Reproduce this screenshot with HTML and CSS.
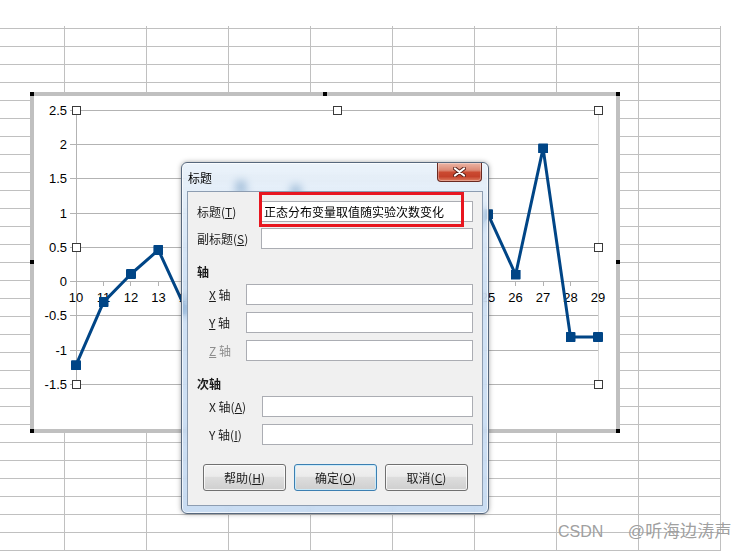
FILE: index.html
```html
<!DOCTYPE html>
<html lang="zh-CN">
  <head>
    <meta charset="UTF-8" />
    <meta name="viewport" content="width=device-width, initial-scale=1.0" />
    <title>标题</title>
    <link rel="stylesheet" href="styles.css">
  </head>
  <body>
    <div class="sheet"></div>

    <!-- chart object sitting on the sheet -->
    <div class="chart">
      <svg width="590" height="341" viewBox="30 92 590 341">
        <defs>
          <marker id="sq" viewBox="0 0 10 10" refX="5" refY="5" markerWidth="10" markerHeight="10" markerUnits="userSpaceOnUse">
            <rect width="10" height="10" rx="1" fill="#004586" />
          </marker>
        </defs>
        <rect class="frame" x="32" y="94" width="586" height="337" />

        <g class="grid">
          <line x1="70" y1="110.5" x2="598" y2="110.5" />
          <line x1="70" y1="144.5" x2="598" y2="144.5" />
          <line x1="70" y1="178.5" x2="598" y2="178.5" />
          <line x1="70" y1="213.5" x2="598" y2="213.5" />
          <line x1="70" y1="247.5" x2="598" y2="247.5" />
          <line x1="70" y1="281.5" x2="598" y2="281.5" />
          <line x1="70" y1="315.5" x2="598" y2="315.5" />
          <line x1="70" y1="350.5" x2="598" y2="350.5" />
          <line x1="70" y1="384.5" x2="598" y2="384.5" />
          <line x1="76.5" y1="110.5" x2="76.5" y2="384.5" />
          <line class="edge" x1="598.5" y1="110.5" x2="598.5" y2="384.5" />
        </g>

        <g class="ticks">
          <line x1="103.5" y1="281.5" x2="103.5" y2="286" />
          <line x1="130.5" y1="281.5" x2="130.5" y2="286" />
          <line x1="158.5" y1="281.5" x2="158.5" y2="286" />
          <line x1="185.5" y1="281.5" x2="185.5" y2="286" />
          <line x1="488.5" y1="281.5" x2="488.5" y2="286" />
          <line x1="515.5" y1="281.5" x2="515.5" y2="286" />
          <line x1="543.5" y1="281.5" x2="543.5" y2="286" />
          <line x1="570.5" y1="281.5" x2="570.5" y2="286" />
        </g>

        <g class="ylabels">
          <text x="67" y="115">2.5</text>
          <text x="67" y="149">2</text>
          <text x="67" y="183">1.5</text>
          <text x="67" y="218">1</text>
          <text x="67" y="252">0.5</text>
          <text x="67" y="286">0</text>
          <text x="67" y="320">-0.5</text>
          <text x="67" y="355">-1</text>
          <text x="67" y="389">-1.5</text>
        </g>

        <!-- 15..24 sit under the dialog -->
        <g class="xlabels">
          <text x="76" y="302">10</text>
          <text x="103.5" y="302">11</text>
          <text x="131" y="302">12</text>
          <text x="158.4" y="302">13</text>
          <text x="185.9" y="302">14</text>
          <text x="488.1" y="302">25</text>
          <text x="515.6" y="302">26</text>
          <text x="543.1" y="302">27</text>
          <text x="570.5" y="302">28</text>
          <text x="598" y="302">29</text>
        </g>

        <polyline class="series" points="76,365.2 103.5,302.1 131,274 158.4,250 185.9,309.6 213.4,264.4 240.8,185.5 268.3,243.8 295.8,190.3 323.3,302.1 350.7,230.1 378.2,346.7 405.7,260.9 433.2,324 460.6,254 488.1,214.3 515.6,274.6 543.1,148.4 570.5,337.1 598,337.1" />

        <g class="handles">
          <rect x="72.5" y="106.5" width="8" height="8" />
          <rect x="333.5" y="106.5" width="8" height="8" />
          <rect x="594.5" y="106.5" width="8" height="8" />
          <rect x="72.5" y="243.5" width="8" height="8" />
          <rect x="594.5" y="243.5" width="8" height="8" />
          <rect x="72.5" y="380.5" width="8" height="8" />
          <rect x="333.5" y="380.5" width="8" height="8" />
          <rect x="594.5" y="380.5" width="8" height="8" />
        </g>

        <g class="grips">
          <rect x="30" y="92" width="4" height="4" />
          <rect x="323" y="92" width="4" height="4" />
          <rect x="616" y="92" width="4" height="4" />
          <rect x="30" y="260" width="4" height="4" />
          <rect x="616" y="260" width="4" height="4" />
          <rect x="30" y="429" width="4" height="4" />
          <rect x="323" y="429" width="4" height="4" />
          <rect x="616" y="429" width="4" height="4" />
        </g>
      </svg>
    </div>

    <!-- title dialog -->
    <div class="dialog">
      <div class="titlebar">
        <span class="caption">标题</span>
        <button class="close">
          <svg width="13" height="10" viewBox="0 0 13 10">
            <path class="x-shadow" d="M2 1.5 L11 8.5 M11 1.5 L2 8.5" />
            <path class="x-mark" d="M2 1.5 L11 8.5 M11 1.5 L2 8.5" />
          </svg>
        </button>
      </div>

      <div class="client">
        <div class="field first">
          <label>标题(<u>T</u>)</label>
          <input type="text" value="正态分布变量取值随实验次数变化" />
        </div>
        <div class="field first">
          <label>副标题(<u>S</u>)</label>
          <input type="text" value="" />
        </div>

        <div class="head">轴</div>
        <div class="field axis">
          <label><u>X</u> 轴</label>
          <input type="text" value="" />
        </div>
        <div class="field axis">
          <label><u>Y</u> 轴</label>
          <input type="text" value="" />
        </div>
        <div class="field axis off">
          <label><u>Z</u> 轴</label>
          <input type="text" value="" disabled />
        </div>

        <div class="head">次轴</div>
        <div class="field second">
          <label>X 轴(<u>A</u>)</label>
          <input type="text" value="" />
        </div>
        <div class="field second">
          <label>Y 轴(<u>I</u>)</label>
          <input type="text" value="" />
        </div>

        <div class="btns">
          <button class="btn">帮助(<u>H</u>)</button>
          <button class="btn default">确定(<u>O</u>)</button>
          <button class="btn">取消(<u>C</u>)</button>
        </div>
      </div>
    </div>

    <div class="highlight"></div>
    <div class="watermark">CSDN <span class="cjk">@听海边涛声</span></div>
  </body>
</html>
```

FILE: styles.css
```css
body {
  margin: 0;
  width: 745px;
  height: 551px;
  overflow: hidden;
  position: relative;
  background: #fff;
  font-family: "Noto Sans CJK SC", "Liberation Sans", sans-serif;
}

/* spreadsheet cells */
.sheet {
  margin-top: 26px;
  width: 721px;
  height: 525px;
  background-image:
    repeating-linear-gradient(to right, transparent 0 64px, #c0c0c0 64px 65px, transparent 65px 82px),
    repeating-linear-gradient(to bottom, transparent 0 2px, #c0c0c0 2px 3px, transparent 3px 18px);
}

/* chart */
.chart {
  position: absolute;
  left: 30px;
  top: 92px;
  width: 590px;
  height: 341px;
}
.chart svg {
  display: block;
}
.frame {
  fill: #fff;
  stroke: #c0c0c0;
  stroke-width: 4;
}
.grid line,
.ticks line {
  stroke: #b3b3b3;
  stroke-width: 1;
}
.grid .edge {
  stroke: #d6d6d6;
}
.ylabels text,
.xlabels text {
  font-family: "Liberation Sans", Arial, sans-serif;
  font-size: 13px;
  fill: #000;
}
.ylabels text {
  text-anchor: end;
}
.xlabels text {
  text-anchor: middle;
}
.series {
  fill: none;
  stroke: #004586;
  stroke-width: 3;
  stroke-linejoin: round;
  marker-start: url(#sq);
  marker-mid: url(#sq);
  marker-end: url(#sq);
}
.handles rect {
  fill: #fff;
  stroke: #3a3a3a;
  stroke-width: 1;
}
.grips rect {
  fill: #000;
}

/* dialog window */
.dialog {
  position: absolute;
  left: 181px;
  top: 162px;
  width: 308px;
  height: 352px;
  box-sizing: border-box;
  display: flex;
  flex-direction: column;
  padding: 0 5px 7px 5px;
  border: 1px solid #56677c;
  border-radius: 6px;
  background: linear-gradient(rgba(226, 237, 248, 0.7), rgba(196, 218, 242, 0.76) 30%, rgba(188, 212, 239, 0.8));
  backdrop-filter: blur(4px);
  box-shadow: inset 0 0 0 1px rgba(255, 255, 255, 0.7), 0 0 5px rgba(0, 0, 0, 0.35);
}
.titlebar {
  height: 28px;
  flex: none;
}
.caption {
  display: inline-block;
  padding: 7px 0 0 1px;
  font-size: 12px;
  line-height: 16px;
  color: #000;
}
.close {
  position: absolute;
  top: 0;
  right: 6px;
  width: 45px;
  height: 19px;
  padding: 0;
  box-sizing: border-box;
  border: 1px solid #6a2a21;
  border-top: none;
  border-radius: 0 0 4px 4px;
  background: linear-gradient(#ecb5a5, #dc8a75 40%, #cb4a31 52%, #c4412a 75%, #de7d60);
  box-shadow: inset 0 0 0 1px rgba(255, 255, 255, 0.3);
  display: flex;
  align-items: center;
  justify-content: center;
}
.close svg {
  display: block;
}
.x-shadow {
  stroke: #5b2219;
  stroke-width: 4;
  stroke-linecap: round;
  fill: none;
}
.x-mark {
  stroke: #fff;
  stroke-width: 2.2;
  stroke-linecap: round;
  fill: none;
}
.client {
  flex: 1;
  background: #f0f0f0;
  border: 1px solid #8d9db1;
  padding: 9px 9px 0 9px;
  font-size: 12px;
  color: #1b1b1b;
}
.field {
  display: flex;
  align-items: center;
  height: 21px;
}
.field label {
  flex: none;
  line-height: 16px;
}
.field input {
  flex: 1;
  min-width: 0;
  height: 21px;
  box-sizing: border-box;
  margin: 0;
  padding: 0 2px;
  border: 1px solid #abadb3;
  background: #fff;
  font-family: "Noto Sans CJK SC", sans-serif;
  font-size: 12px;
  color: #000;
}
.field.first label {
  width: 64px;
}
.field.first + .field.first {
  margin-top: 6px;
}
.field.axis label {
  width: 37px;
  padding-left: 12px;
}
.field.second label {
  width: 53px;
  padding-left: 12px;
}
.field.axis + .field.axis,
.field.second + .field.second {
  margin-top: 7px;
}
.field.off label {
  color: #8d8d8d;
}
.head {
  margin: 13px 0 2px;
  line-height: 20px;
  font-weight: bold;
}
.btns {
  display: flex;
  gap: 8px;
  margin: 19px 0 0 6px;
}
.btn {
  width: 83px;
  height: 27px;
  box-sizing: border-box;
  padding: 0;
  border: 1px solid #707070;
  border-radius: 3px;
  background: linear-gradient(#f2f2f2, #ebebeb 45%, #dddddd 50%, #cfcfcf);
  box-shadow: inset 0 0 0 1px rgba(255, 255, 255, 0.75);
  font-family: "Noto Sans CJK SC", sans-serif;
  font-size: 12px;
  color: #1b1b1b;
}
.btn.default {
  border-color: #3c7fb1;
  box-shadow: inset 0 0 0 1px rgba(200, 235, 252, 0.9);
}

/* red annotation box over the title field */
.highlight {
  position: absolute;
  left: 259px;
  top: 192px;
  width: 205px;
  height: 35px;
  box-sizing: border-box;
  border: 3px solid #e8161f;
}

.watermark {
  position: absolute;
  left: 558px;
  top: 522px;
  font-family: "Liberation Sans", "Noto Sans CJK SC", sans-serif;
  font-size: 16px;
  line-height: 20px;
  color: #a0a0a0;
  white-space: nowrap;
}
.watermark .cjk {
  margin-left: 20px;
  font-size: 17px;
  letter-spacing: 0.3px;
}
```
